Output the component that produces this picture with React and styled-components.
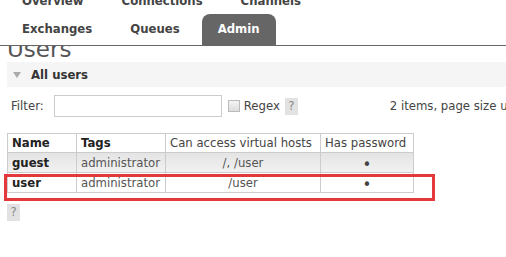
import React from "react";
import styled, { createGlobalStyle } from "styled-components";

const GlobalStyle = createGlobalStyle`
  html, body {
    margin: 0;
    padding: 0;
    background: #fff;
    overflow: hidden;
  }
  body {
    font-family: "DejaVu Sans", Verdana, sans-serif;
    font-size: 11.7px;
    color: #444;
  }
`;

const topTabs = ["Overview", "Connections", "Channels"];
const bottomTabs = ["Exchanges", "Queues", "Admin"];

const users = [
  { name: "guest", tags: "administrator", vhosts: "/, /user", alt: true },
  { name: "user", tags: "administrator", vhosts: "/user", alt: false },
];

const App = () => {
  return (
    <Page>
      <GlobalStyle />
      <Nav>
        <TabRow>
          {topTabs.map((t) => (
            <Tab key={t} low>
              {t}
            </Tab>
          ))}
        </TabRow>
        <TabRow>
          {bottomTabs.map((t) => (
            <Tab key={t} active={t === "Admin"}>
              {t}
            </Tab>
          ))}
        </TabRow>
      </Nav>
      <Main>
        <TitleClip>
          <Title>Users</Title>
        </TitleClip>
        <SectionHead>
          <Arrow />
          All users
        </SectionHead>
        <FilterRow>
          <Label>Filter:</Label>
          <FilterInput type="text" />
          <Check />
          <Label>Regex</Label>
          <Help>?</Help>
          <Count>2 items, page size up to 100</Count>
        </FilterRow>
        <Table>
          <thead>
            <tr>
              <Th bold w={69}>Name</Th>
              <Th bold w={89}>Tags</Th>
              <Th w={155}>Can access virtual hosts</Th>
              <Th w={93}>Has password</Th>
            </tr>
          </thead>
          <tbody>
            {users.map((u) => (
              <Row key={u.name} alt={u.alt}>
                <NameCell>{u.name}</NameCell>
                <Td>{u.tags}</Td>
                <Td center>{u.vhosts}</Td>
                <Td center>
                  <Bullet>•</Bullet>
                </Td>
              </Row>
            ))}
          </tbody>
        </Table>
        <BottomHelp>?</BottomHelp>
      </Main>
      <Highlight />
    </Page>
  );
};

export default App;

const Page = styled.div`
  position: relative;
  width: 506px;
  margin-top: -17px;
`;

const Nav = styled.div`
  padding-left: 6px;
  border-bottom: 1px solid #666;
`;

const TabRow = styled.div`
  display: flex;
  height: 31px;
`;

const Tab = styled.div`
  flex-shrink: 0;
  height: 31px;
  line-height: ${({ low }) => (low ? "36px" : "31px")};
  padding: 0 16px;
  margin-right: 6px;
  font-weight: bold;
  white-space: nowrap;
  color: ${({ active }) => (active ? "#fff" : "#444")};
  background: ${({ active }) => (active ? "#666" : "transparent")};
  border-radius: 8px 8px 0 0;
  overflow: hidden;
`;

const Main = styled.div`
  padding-left: 7px;
`;

const TitleClip = styled.div`
  height: 12px;
  overflow: hidden;
`;

const Title = styled.h1`
  margin: -8.5px 0 0;
  font-size: 23px;
  line-height: 23px;
  font-weight: normal;
  color: #555;
`;

const SectionHead = styled.div`
  margin-top: 4px;
  height: 25px;
  display: flex;
  align-items: center;
  padding-left: 6px;
  background: #f5f5f5;
  font-weight: bold;
  color: #333;
`;

const Arrow = styled.span`
  width: 0;
  height: 0;
  border-left: 4.5px solid transparent;
  border-right: 4.5px solid transparent;
  border-top: 6px solid #aaa;
  margin-right: 10px;
`;

const FilterRow = styled.div`
  display: flex;
  align-items: center;
  margin-top: 8px;
  padding-left: 4px;
  height: 22px;
  white-space: nowrap;
  & > * {
    flex-shrink: 0;
  }
`;

const Label = styled.span`
  color: #444;
`;

const FilterInput = styled.input`
  box-sizing: border-box;
  width: 168px;
  height: 22px;
  margin: 0 0 0 10px;
  border: 1px solid #ccc;
  padding: 0;
`;

const Check = styled.span`
  box-sizing: border-box;
  width: 12px;
  height: 12px;
  margin: 0 4px 0 6px;
  border: 1px solid #bbb;
  background: linear-gradient(#f4f4f4, #ddd);
`;

const Help = styled.span`
  width: 13px;
  height: 17px;
  line-height: 17px;
  text-align: center;
  margin-left: 5px;
  background: #e2e2e2;
  color: #888;
`;

const Count = styled.span`
  margin-left: 92px;
  color: #444;
`;

const Table = styled.table`
  margin-top: 16px;
  border-collapse: collapse;
  width: 406px;
  table-layout: fixed;
`;

const Th = styled.th`
  box-sizing: border-box;
  width: ${({ w }) => w}px;
  height: 19px;
  padding: 0 4px;
  text-align: left;
  font-weight: ${({ bold }) => (bold ? "bold" : "normal")};
  color: ${({ bold }) => (bold ? "#222" : "#444")};
  border: 1px solid #ccc;
  white-space: nowrap;
  overflow: hidden;
`;

const Row = styled.tr`
  background: ${({ alt }) =>
    alt ? "linear-gradient(#e4e4e4, #f2f2f2)" : "#fff"};
`;

const Td = styled.td`
  height: 19px;
  padding: 0 4px;
  border: 1px solid #ccc;
  color: #555;
  white-space: nowrap;
  text-align: ${({ center }) => (center ? "center" : "left")};
`;

const NameCell = styled(Td)`
  font-weight: bold;
  color: #222;
`;

const Bullet = styled.span`
  font-size: 15px;
  line-height: 0;
  vertical-align: -3px;
  color: #444;
`;

const BottomHelp = styled.div`
  margin-top: 11px;
  width: 13px;
  height: 17px;
  line-height: 17px;
  text-align: center;
  background: #e2e2e2;
  color: #888;
`;

const Highlight = styled.div`
  position: absolute;
  left: 4px;
  top: 191px;
  width: 431px;
  height: 27px;
  box-sizing: border-box;
  border: 3px solid #e3383c;
`;
